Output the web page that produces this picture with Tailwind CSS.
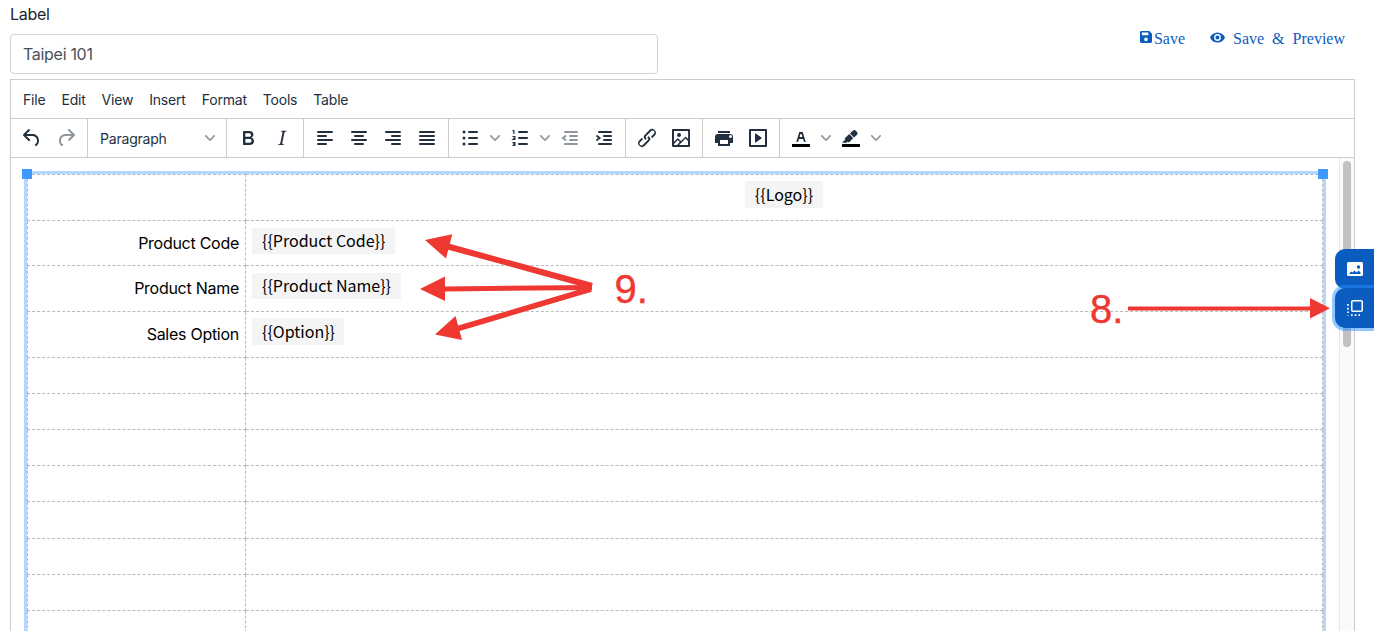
<!DOCTYPE html>
<html lang="en">
<head>
  <meta charset="UTF-8" />
  <title>Label</title>
  <meta name="viewport" content="width=device-width, initial-scale=1" />
  <script src="https://cdn.jsdelivr.net/npm/@tailwindcss/browser@4"></script>
</head>
<body class="relative h-[631px] overflow-hidden bg-white font-[Inter,sans-serif] text-[#212529]">
  <div class="ml-[10px] w-[1345px] h-[631px] flex flex-col">
    <header class="h-[79px] shrink-0 flex justify-between">
      <div class="w-[648px] pt-[2px]">
        <label for="label" class="block h-8 text-[16px] leading-6 tracking-[-0.3px]">Label</label>
        <input id="label" type="text" value="Taipei 101" class="block w-full h-10 px-3 rounded border border-[#ced4da] text-[16px] tracking-[-0.3px] text-[#495057]" />
      </div>
      <nav class="flex items-start pt-[27px] pr-[10px] font-['Liberation_Serif',serif] text-[16px] leading-6 text-[#0b5cbf]">
        <a href="#" class="flex">
          <svg class="w-3 h-3 mt-1 mr-[2px]" viewBox="0 0 13 13" fill="currentColor" fill-rule="evenodd"><path d="M1.500 0H10l3 3v8.500a1.500 1.500 0 0 1-1.500 1.500h-10A1.500 1.500 0 0 1 0 11.500v-10A1.500 1.500 0 0 1 1.500 0ZM2 1.500v3h7v-3ZM6.500 7a2 2 0 1 0 0 4 2 2 0 0 0 0-4Z"/></svg>
          <span>Save</span>
        </a>
        <a href="#" class="flex ml-[25px]">
          <svg class="w-[15px] h-[11px] mt-[5px] mr-[8px]" viewBox="0 0 22 15" fill="currentColor" fill-rule="evenodd"><path d="M11 0C6 0 1.700 3.100 0 7.500 1.700 11.900 6 15 11 15s9.300-3.100 11-7.500C20.300 3.100 16 0 11 0Zm0 12.500a5 5 0 1 1 0-10 5 5 0 0 1 0 10Zm0-8a3 3 0 1 0 0 6 3 3 0 0 0 0-6Z"/></svg>
          <span class="[word-spacing:4px]">Save &amp; Preview</span>
        </a>
      </nav>
    </header>

    <!-- editor -->
    <div class="flex-1 min-h-0 flex flex-col border border-b-0 border-[#ccc] text-[#222f3e]">
      <div class="h-[39px] shrink-0 flex items-center gap-4 pl-3 pt-px border-b border-[#ccc] text-[14px] leading-5 tracking-[-0.2px]">
        <span>File</span><span>Edit</span><span>View</span><span>Insert</span><span>Format</span><span>Tools</span><span>Table</span>
      </div>
      <div class="h-[39px] shrink-0 flex border-b border-[#ccc] fill-[#222f3e]">
        <div class="flex items-center px-1 border-r border-[#ccc]">
          <button class="w-[34px] flex justify-center"><svg width="24" height="24"><path d="M6.400 8H12c3.700 0 6.200 2 6.800 5.100.6 2.700-.4 5.600-2.300 6.800a1 1 0 0 1-1-1.800c1.100-.6 1.800-2.700 1.400-4.600-.5-2.100-2.100-3.500-4.900-3.500H6.400l3.300 3.300a1 1 0 1 1-1.400 1.400l-5-5a1 1 0 0 1 0-1.400l5-5a1 1 0 0 1 1.400 1.400L6.400 8Z"/></svg></button>
          <button class="w-[34px] flex justify-center opacity-50"><svg width="24" height="24"><path d="M17.600 10H12c-2.800 0-4.400 1.400-4.900 3.500-.4 2 .3 4 1.400 4.600a1 1 0 1 1-1 1.800c-2-1.200-2.900-4.100-2.300-6.800.6-3 3-5.100 6.800-5.100h5.600l-3.300-3.300a1 1 0 1 1 1.400-1.400l5 5a1 1 0 0 1 0 1.400l-5 5a1 1 0 0 1-1.400-1.400l3.300-3.300Z"/></svg></button>
        </div>
        <div class="w-[139px] flex items-center justify-between pl-3 pr-[11px] border-r border-[#ccc]">
          <span class="text-[14px] tracking-[-0.2px]">Paragraph</span>
          <svg class="opacity-50" width="10" height="10"><path d="M8.700 2.200c.3-.3.8-.3 1 0 .4.4.4.9 0 1.200L5.700 7.800c-.3.3-.9.3-1.200 0L.2 3.400a.8.8 0 0 1 0-1.200c.3-.3.8-.3 1.100 0L5 6l3.700-3.800Z"/></svg>
        </div>
        <div class="flex items-center px-1 border-r border-[#ccc]">
          <button class="w-[34px] flex justify-center"><svg width="24" height="24"><path d="M7.800 19c-.3 0-.5 0-.6-.2l-.2-.5V5.700c0-.2 0-.4.2-.5l.6-.2h5c1.500 0 2.700.3 3.500 1 .7.6 1.100 1.400 1.100 2.500a3 3 0 0 1-.6 1.900c-.4.6-1 1-1.600 1.200.4.1.9.3 1.300.6s.8.7 1 1.200c.4.4.5 1 .5 1.600 0 1.300-.4 2.300-1.300 3-.8.7-2.100 1-3.800 1H7.800Zm5-8.300c.6 0 1.200-.1 1.600-.5.4-.3.6-.7.6-1.300 0-1.100-.8-1.700-2.300-1.700H9.300v3.500h3.400Zm.5 6c.7 0 1.300-.1 1.700-.4.4-.4.6-.9.6-1.500s-.2-1-.7-1.400c-.4-.3-1-.4-2-.4H9.400v3.800h4Z"/></svg></button>
          <button class="w-[34px] flex justify-center"><svg width="24" height="24"><path d="m16.700 4.700-.1.9h-.3c-.6 0-1 0-1.400.3-.3.3-.4.6-.5 1.100l-2.100 9.800v.6c0 .5.4.8 1.400.8h.2l-.2.8H8l.2-.8h.2c1.100 0 1.800-.5 2-1.500l2-9.800.1-.5c0-.6-.4-.8-1.400-.8h-.3l.2-.9h5.800Z"/></svg></button>
        </div>
        <div class="flex items-center px-1 border-r border-[#ccc] stroke-[#222f3e]">
          <button class="w-[34px] flex justify-center"><svg width="24" height="24" stroke-width="2" stroke-linecap="round"><path d="M5 6h14M5 10h8M5 14h14M5 18h8"/></svg></button>
          <button class="w-[34px] flex justify-center"><svg width="24" height="24" stroke-width="2" stroke-linecap="round"><path d="M5 6h14M8 10h8M5 14h14M8 18h8"/></svg></button>
          <button class="w-[34px] flex justify-center"><svg width="24" height="24" stroke-width="2" stroke-linecap="round"><path d="M5 6h14M11 10h8M5 14h14M11 18h8"/></svg></button>
          <button class="w-[34px] flex justify-center"><svg width="24" height="24" stroke-width="2" stroke-linecap="round"><path d="M5 6h14M5 10h14M5 14h14M5 18h14"/></svg></button>
        </div>
        <div class="flex items-center px-1 border-r border-[#ccc]">
          <button class="w-[34px] flex justify-center"><svg width="24" height="24"><path class="stroke-[#222f3e]" stroke-width="2" stroke-linecap="round" d="M11 6h8M11 12h8M11 18h8"/><circle cx="6" cy="6" r="1.500"/><circle cx="6" cy="12" r="1.500"/><circle cx="6" cy="18" r="1.500"/></svg></button>
          <button class="w-4 flex justify-center opacity-50"><svg width="10" height="10"><path d="M8.700 2.200c.3-.3.8-.3 1 0 .4.4.4.9 0 1.200L5.700 7.800c-.3.3-.9.3-1.200 0L.2 3.400a.8.8 0 0 1 0-1.200c.3-.3.8-.3 1.100 0L5 6l3.700-3.800Z"/></svg></button>
          <button class="w-[34px] flex justify-center"><svg width="24" height="24"><g fill="none" class="stroke-[#222f3e]"><path stroke-width="2" stroke-linecap="round" d="M11 6h8M11 12h8M11 18h8"/><path stroke-width="1.200" d="M4.500 4.600h1.400V8M4.500 10.600h2.400v1.300L5 13.400h2.500M4.500 16.600h2.400v2.800H4.500M5 18h2"/></g></svg></button>
          <button class="w-4 flex justify-center opacity-50"><svg width="10" height="10"><path d="M8.700 2.200c.3-.3.8-.3 1 0 .4.4.4.9 0 1.200L5.700 7.800c-.3.3-.9.3-1.200 0L.2 3.400a.8.8 0 0 1 0-1.200c.3-.3.8-.3 1.100 0L5 6l3.700-3.800Z"/></svg></button>
          <button class="w-[34px] flex justify-center opacity-50"><svg width="24" height="24" fill="none" class="stroke-[#222f3e]" stroke-width="2" stroke-linecap="round"><path d="M7 6h12M12 10h7M12 14h7M7 18h12"/><path fill="none" d="M7.500 10l-2.600 2 2.600 2" stroke-width="1.800"/></svg></button>
          <button class="w-[34px] flex justify-center"><svg width="24" height="24" fill="none" class="stroke-[#222f3e]" stroke-width="2" stroke-linecap="round"><path d="M7 6h12M12 10h7M12 14h7M7 18h12"/><path fill="none" d="M5 10l2.600 2L5 14" stroke-width="1.800"/></svg></button>
        </div>
        <div class="flex items-center px-1 border-r border-[#ccc]">
          <button class="w-[34px] flex justify-center"><svg width="24" height="24"><path d="M6.200 12.300a1 1 0 0 1 1.400 1.400l-2 2a2 2 0 1 0 2.600 2.800l4.800-4.800a1 1 0 0 0 0-1.400 1 1 0 1 1 1.400-1.300 2.900 2.900 0 0 1 0 4L9.600 20a3.900 3.900 0 0 1-5.500-5.500l2-2Zm11.600-.6a1 1 0 0 1-1.400-1.400l2-2a2 2 0 1 0-2.600-2.800L11 10.300a1 1 0 0 0 0 1.400A1 1 0 1 1 9.600 13a2.900 2.900 0 0 1 0-4L14.400 4a3.900 3.900 0 0 1 5.500 5.500l-2 2Z"/></svg></button>
          <button class="w-[34px] flex justify-center"><svg width="24" height="24" fill-rule="evenodd"><path d="m5 15.700 3.300-3.200c.3-.3.7-.3 1 0L12 15l4.100-4c.3-.4.8-.4 1 0l2 1.900V5H5v10.700ZM5 18v1h3l2.800-2.900-2-2L5 17.900Zm14-3-2.500-2.400-6.400 6.500H19v-4ZM4 3h16c.6 0 1 .4 1 1v16c0 .6-.4 1-1 1H4a1 1 0 0 1-1-1V4c0-.6.4-1 1-1Zm6 8a2 2 0 1 0 0-4 2 2 0 0 0 0 4Z"/></svg></button>
        </div>
        <div class="flex items-center px-1 border-r border-[#ccc]">
          <button class="w-[34px] flex justify-center"><svg width="24" height="24" fill-rule="evenodd"><path d="M18 8H6a3 3 0 0 0-3 3v6h3v3h12v-3h3v-6a3 3 0 0 0-3-3Zm-2 10H8v-4h8v4Zm2.500-6a1.500 1.500 0 1 1 0-3 1.500 1.500 0 0 1 0 3ZM18 5H6v2h12V5Z"/></svg></button>
          <button class="w-[34px] flex justify-center"><svg width="24" height="24" fill-rule="evenodd"><path d="M4 3h16c.6 0 1 .4 1 1v16c0 .6-.4 1-1 1H4a1 1 0 0 1-1-1V4c0-.6.4-1 1-1Zm1 2v14h14V5H5Zm4.800 2.600 5.600 4a.5.5 0 0 1 0 .8l-5.600 4A.5.5 0 0 1 9 16V8a.5.5 0 0 1 .8-.4Z"/></svg></button>
        </div>
        <div class="flex items-center px-1">
          <button class="w-[34px] flex justify-center"><svg width="24" height="24"><path fill="#000" d="M3 18h18v3H3z"/><path fill-rule="evenodd" d="M8.700 16h-.8a.5.5 0 0 1-.5-.6l2.700-9c.1-.3.3-.4.5-.4h2.800c.2 0 .4.1.5.4l2.700 9a.5.5 0 0 1-.5.6h-.8a.5.5 0 0 1-.4-.4l-.7-2.200c0-.3-.3-.4-.5-.4h-3.400c-.2 0-.4.1-.5.4l-.7 2.200c0 .3-.2.4-.4.4Zm2.600-7.600-.6 2a.5.5 0 0 0 .5.6h1.600a.5.5 0 0 0 .5-.6l-.6-2c0-.3-.3-.4-.5-.4h-.4c-.2 0-.4.1-.5.4Z"/></svg></button>
          <button class="w-4 flex justify-center opacity-50"><svg width="10" height="10"><path d="M8.700 2.200c.3-.3.8-.3 1 0 .4.4.4.9 0 1.200L5.700 7.800c-.3.3-.9.3-1.200 0L.2 3.400a.8.8 0 0 1 0-1.200c.3-.3.8-.3 1.100 0L5 6l3.700-3.800Z"/></svg></button>
          <button class="w-[34px] flex justify-center"><svg width="24" height="24"><path fill="#000" d="M3 18h18v3H3z"/><path d="M7.700 16.700H3l3.300-3.300-.7-.8L10.200 8l4 4.100-4 4.200c-.2.2-.6.2-.8 0l-.6-.7-1.100 1.100zm5-7.500L11 7.400l3-2.900a2 2 0 0 1 2.600 0L18 6c.7.7.7 2 0 2.700l-2.900 2.900-1.800-1.800-.5-.6"/></svg></button>
          <button class="w-4 flex justify-center opacity-50"><svg width="10" height="10"><path d="M8.700 2.200c.3-.3.8-.3 1 0 .4.4.4.9 0 1.200L5.700 7.800c-.3.3-.9.3-1.200 0L.2 3.400a.8.8 0 0 1 0-1.200c.3-.3.8-.3 1.100 0L5 6l3.700-3.800Z"/></svg></button>
        </div>
      </div>

      <!-- document -->
      <div class="flex-1 min-h-0 flex justify-between overflow-hidden">
        <div class="relative mt-4 ml-4 w-[1296px] h-[500px] outline-3 outline-[#b4d7ff]">
          <table class="w-[1296px] table-fixed border-collapse text-[16px] text-black [&_td]:border [&_td]:border-dashed [&_td]:border-[#bbb] [&_td]:p-0 [&_td]:align-top">
            <colgroup><col class="w-[218px]" /><col /></colgroup>
            <tbody>
              <tr class="h-[46px]"><td></td><td><div class="flex justify-center pt-[6px]"><span class="h-[27px] px-[10px] bg-[#f4f4f4] font-['Noto_Sans_CJK_TC',sans-serif] leading-[27px]">{{Logo}}</span></div></td></tr>
              <tr class="h-[45px]"><td><div class="pt-[10px] pr-[6px] text-right leading-6 tracking-[-0.27px]">Product Code</div></td><td><div class="flex pt-[7px] pl-[6px]"><span class="h-[26px] px-[10px] bg-[#f4f4f4] font-['Noto_Sans_CJK_TC',sans-serif] leading-6">{{Product Code}}</span></div></td></tr>
              <tr class="h-[46px]"><td><div class="pt-[10px] pr-[6px] text-right leading-6 tracking-[-0.27px]">Product Name</div></td><td><div class="flex pt-[7px] pl-[6px]"><span class="h-[26px] px-[10px] bg-[#f4f4f4] font-['Noto_Sans_CJK_TC',sans-serif] leading-6">{{Product Name}}</span></div></td></tr>
              <tr class="h-[46px]"><td><div class="pt-[10px] pr-[6px] text-right leading-6 tracking-[-0.27px]">Sales Option</div></td><td><div class="flex pt-[6px] pl-[6px]"><span class="h-[27px] pl-[10px] pr-[9px] bg-[#f4f4f4] font-['Noto_Sans_CJK_TC',sans-serif] leading-[27px]">{{Option}}</span></div></td></tr>
              <tr class="h-9"><td></td><td></td></tr>
              <tr class="h-9"><td></td><td></td></tr>
              <tr class="h-9"><td></td><td></td></tr>
              <tr class="h-9"><td></td><td></td></tr>
              <tr class="h-[37px]"><td></td><td></td></tr>
              <tr class="h-9"><td></td><td></td></tr>
              <tr class="h-9"><td></td><td></td></tr>
              <tr class="h-9"><td></td><td></td></tr>
            </tbody>
          </table>
          <!-- resize handles -->
          <div class="absolute left-[-5px] top-[-5px] size-[10px] bg-[#4099ff]"></div>
          <div class="absolute right-[-5px] top-[-5px] size-[10px] bg-[#4099ff]"></div>
        </div>
        <div class="w-[15px] pt-[3px] pl-[3px] border-l border-[#e8e8e8] bg-[#fafafa]">
          <div class="w-2 h-[186px] rounded-full bg-[#c1c1c1]"></div>
        </div>
      </div>
    </div>
  </div>

  <!-- side buttons -->
  <button class="absolute left-[1335px] top-[249px] w-[39px] h-10 pl-3 rounded-l-[10px] bg-[#0b5cbf]">
    <svg width="16" height="14" viewBox="0 0 16 14" fill="#fff" fill-rule="evenodd"><path d="M1.500 0h13A1.500 1.500 0 0 1 16 1.500v11a1.500 1.500 0 0 1-1.500 1.500h-13A1.500 1.500 0 0 1 0 12.500v-11A1.500 1.500 0 0 1 1.500 0ZM2.500 12h11v-1.500L11.500 8.500 9.500 10.500 7.500 8.500 5.500 10.500 4.500 9.500 2.500 11ZM11.500 3.300a1.700 1.700 0 1 0 0 3.400 1.700 1.700 0 0 0 0-3.400Z"/></svg>
  </button>
  <button class="absolute left-[1335px] top-[288px] w-[39px] h-10 pl-3 rounded-l-[10px] bg-[#0b5cbf] ring-3 ring-[#268fff]/50">
    <svg width="16" height="16" viewBox="0 0 16 16" fill="none" stroke="#fff"><rect x="4.750" y="0.750" width="10.500" height="10.500" rx="1" stroke-width="1.500"/><path stroke-width="1.700" stroke-dasharray="1.700 2" d="M1 4v11.500M4 15.100h9"/></svg>
  </button>

  <!-- step annotations -->
  <svg class="absolute left-0 top-0 pointer-events-none" width="1374" height="631" fill="#ee3831" stroke="none">
    <g stroke="#ee3831" stroke-width="6"><path d="M448 246.500L592 286"/><path stroke-width="5" d="M444 289L592 287.500"/><path stroke-width="5.500" d="M458 328.500L591 289"/><path stroke-width="4" d="M1128 308.500H1311"/></g>
    <path d="M425 240L452.300 234.300L446 258.500ZM420 289L445 276.500V301ZM435 334.500L455.500 316L462 340ZM1330 308.300L1310 298V318.500Z"/>
    <g class="font-['Liberation_Sans',sans-serif] text-[40px]" stroke="#ee3831" stroke-width="0.400"><text x="614.500" y="303">9.</text><text x="1090" y="323">8.</text></g>
  </svg>
</body>
</html>
